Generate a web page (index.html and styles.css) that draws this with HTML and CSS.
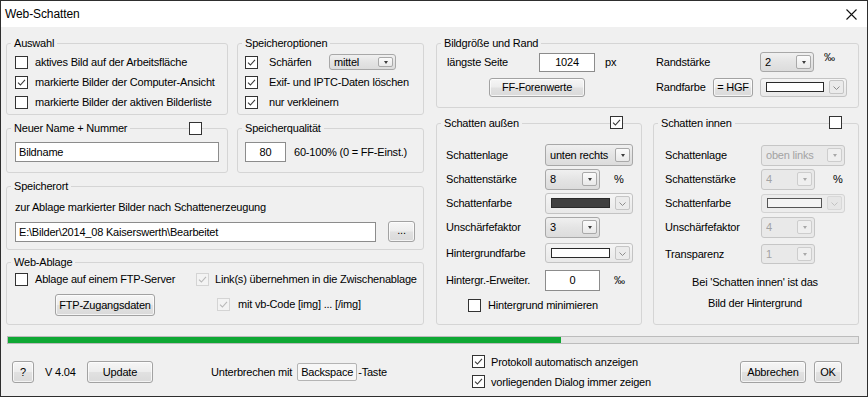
FILE: index.html
```html
<!DOCTYPE html>
<html lang="de">
<head>
<meta charset="utf-8">
<title>Web-Schatten</title>
<link rel="stylesheet" href="styles.css">
</head>
<body>
<div class="win">
  <div class="titlebar">
    <span class="title">Web-Schatten</span>
    <svg class="close" width="11" height="11" viewBox="0 0 11 11"><path d="M0.5 0.5 L10.5 10.5 M10.5 0.5 L0.5 10.5" stroke="#111" stroke-width="1.1" fill="none"/></svg>
  </div>
  <div class="client">
    <div class="main">
      <div class="leftcol">
        <div class="row row1">
          <fieldset class="grp g-auswahl">
            <legend>Auswahl</legend>
            <div class="gbody">
              <div class="crow"><span class="cb"></span><span>aktives Bild auf der Arbeitsfläche</span></div>
              <div class="crow"><span class="cb"><svg viewBox="0 0 11 11"><path d="M2 5.6 L4.4 8 L9 2.8"/></svg></span><span>markierte Bilder der Computer-Ansicht</span></div>
              <div class="crow"><span class="cb"></span><span>markierte Bilder der aktiven Bilderliste</span></div>
            </div>
          </fieldset>
          <fieldset class="grp g-speicher">
            <legend>Speicheroptionen</legend>
            <div class="gbody">
              <div class="crow gap11"><span class="cb"><svg viewBox="0 0 11 11"><path d="M2 5.6 L4.4 8 L9 2.8"/></svg></span><span class="lbl-schaerfen">Schärfen</span><span class="combo w67 h16"><span class="ctext">mittel</span><span class="cbtn"><i class="arr"></i></span></span></div>
              <div class="crow gap11"><span class="cb"><svg viewBox="0 0 11 11"><path d="M2 5.6 L4.4 8 L9 2.8"/></svg></span><span>Exif- und IPTC-Daten löschen</span></div>
              <div class="crow gap11"><span class="cb"><svg viewBox="0 0 11 11"><path d="M2 5.6 L4.4 8 L9 2.8"/></svg></span><span>nur verkleinern</span></div>
            </div>
          </fieldset>
        </div>
        <div class="row row2">
          <div class="grpwrap w222">
            <fieldset class="grp g-name">
              <legend>Neuer Name + Nummer</legend>
              <div class="gbody">
                <input class="tb w204" type="text" value="Bildname">
              </div>
            </fieldset>
            <span class="cb legend-cb cb-name"></span>
          </div>
          <fieldset class="grp g-quali">
            <legend>Speicherqualität</legend>
            <div class="gbody">
              <input class="tb w41 center" type="text" value="80">
              <span>60-100% (0 = FF-Einst.)</span>
            </div>
          </fieldset>
        </div>
        <fieldset class="grp g-ort">
          <legend>Speicherort</legend>
          <div class="gbody">
            <div class="ort-text">zur Ablage markierter Bilder nach Schattenerzeugung</div>
            <div class="ort-row">
              <input class="tb w361" type="text" value="E:\Bilder\2014_08 Kaiserswerth\Bearbeitet">
              <span class="btn b-dots">...</span>
            </div>
          </div>
        </fieldset>
        <fieldset class="grp g-web">
          <legend>Web-Ablage</legend>
          <div class="gbody">
            <div class="crow"><span class="cb"></span><span>Ablage auf einem FTP-Server</span></div>
            <div class="crow gap6"><span class="cb dis"><svg viewBox="0 0 11 11"><path d="M2 5.6 L4.4 8 L9 2.8"/></svg></span><span>Link(s) übernehmen in die Zwischenablage</span></div>
            <div class="wcell"><span class="btn b-ftp">FTP-Zugangsdaten</span></div>
            <div class="crow gap8 indent-vb"><span class="cb dis"><svg viewBox="0 0 11 11"><path d="M2 5.6 L4.4 8 L9 2.8"/></svg></span><span>mit vb-Code [img] ... [/img]</span></div>
          </div>
        </fieldset>
      </div>

      <div class="rightcol">
        <fieldset class="grp g-bild">
          <legend>Bildgröße und Rand</legend>
          <div class="gbody">
            <div class="brow">
              <span class="lbl w92">längste Seite</span>
              <input class="tb w56 h19 center" type="text" value="1024">
              <span class="unit">px</span>
            </div>
            <div class="brow">
              <span class="lbl w104">Randstärke</span>
              <span class="combo w54 h20"><span class="ctext">2</span><span class="cbtn"><i class="arr"></i></span></span>
              <span class="permille up">‰</span>
            </div>
            <div class="brow">
              <span class="btn b-ff">FF-Forenwerte</span>
            </div>
            <div class="brow">
              <span class="lbl w57">Randfarbe</span>
              <span class="btn b-hgf">= HGF</span>
              <span class="ccombo w87 h19"><span class="swatch white"></span><span class="cbtn2"><svg viewBox="0 0 13 11"><path d="M3.5 4.5 L6.5 7.5 L9.5 4.5"/></svg></span></span>
            </div>
          </div>
        </fieldset>

        <div class="row row-schatten">
          <div class="grpwrap w206">
            <fieldset class="grp g-aussen">
              <legend>Schatten außen</legend>
              <div class="gbody">
                <div class="srow"><span class="lbl w99">Schattenlage</span><span class="combo w88 h22"><span class="ctext">unten rechts</span><span class="cbtn"><i class="arr"></i></span></span></div>
                <div class="srow"><span class="lbl w99">Schattenstärke</span><span class="combo w55 h21"><span class="ctext">8</span><span class="cbtn"><i class="arr"></i></span></span><span class="unit u14">%</span></div>
                <div class="srow"><span class="lbl w99">Schattenfarbe</span><span class="ccombo w88 h21"><span class="swatch dark"></span><span class="cbtn2"><svg viewBox="0 0 13 11"><path d="M3.5 4.5 L6.5 7.5 L9.5 4.5"/></svg></span></span></div>
                <div class="srow"><span class="lbl w99">Unschärfefaktor</span><span class="combo w55 h21"><span class="ctext">3</span><span class="cbtn"><i class="arr"></i></span></span></div>
                <div class="srow mt2"><span class="lbl w99">Hintergrundfarbe</span><span class="ccombo w88 h20"><span class="swatch white"></span><span class="cbtn2"><svg viewBox="0 0 13 11"><path d="M3.5 4.5 L6.5 7.5 L9.5 4.5"/></svg></span></span></div>
                <div class="srow mt2 h26"><span class="lbl w99">Hintergr.-Erweiter.</span><input class="tb w55 h21 center" type="text" value="0"><span class="unit u14">‰</span></div>
                <div class="srow crow-ind"><span class="cb"></span><span>Hintergrund minimieren</span></div>
              </div>
            </fieldset>
            <span class="cb legend-cb cb-aussen"><svg viewBox="0 0 11 11"><path d="M2 5.6 L4.4 8 L9 2.8"/></svg></span>
          </div>
          <div class="grpwrap w206">
            <fieldset class="grp g-innen">
              <legend>Schatten innen</legend>
              <div class="gbody">
                <div class="srow"><span class="lbl w96">Schattenlage</span><span class="combo dis w84 h21"><span class="ctext">oben links</span><span class="cbtn"><i class="arr"></i></span></span></div>
                <div class="srow"><span class="lbl w96">Schattenstärke</span><span class="combo dis w54 h21"><span class="ctext">4</span><span class="cbtn"><i class="arr"></i></span></span><span class="unit u18">%</span></div>
                <div class="srow"><span class="lbl w96">Schattenfarbe</span><span class="ccombo dis w84 h19"><span class="swatch light"></span><span class="cbtn2"><svg viewBox="0 0 13 11"><path d="M3.5 4.5 L6.5 7.5 L9.5 4.5"/></svg></span></span></div>
                <div class="srow"><span class="lbl w96">Unschärfefaktor</span><span class="combo dis w54 h21"><span class="ctext">4</span><span class="cbtn"><i class="arr"></i></span></span></div>
                <div class="srow mt3"><span class="lbl w96">Transparenz</span><span class="combo dis w54 h20"><span class="ctext">1</span><span class="cbtn"><i class="arr"></i></span></span></div>
                <div class="note">
                  <div>Bei 'Schatten innen' ist das</div>
                  <div>Bild der Hintergrund</div>
                </div>
              </div>
            </fieldset>
            <span class="cb legend-cb cb-innen"></span>
          </div>
        </div>
      </div>
    </div>

    <div class="progress"><div class="fill" style="width:65%"></div></div>

    <div class="footer">
      <span class="btn b-help">?</span>
      <span class="version">V 4.04</span>
      <span class="btn b-update">Update</span>
      <span class="interrupt">Unterbrechen mit <span class="key">Backspace</span><span class="after-key">-Taste</span></span>
      <div class="fchecks">
        <div class="crow gap6"><span class="cb"><svg viewBox="0 0 11 11"><path d="M2 5.6 L4.4 8 L9 2.8"/></svg></span><span>Protokoll automatisch anzeigen</span></div>
        <div class="crow gap6"><span class="cb"><svg viewBox="0 0 11 11"><path d="M2 5.6 L4.4 8 L9 2.8"/></svg></span><span>vorliegenden Dialog immer zeigen</span></div>
      </div>
      <span class="btn b-cancel">Abbrechen</span>
      <span class="btn b-ok">OK</span>
    </div>
  </div>
</div>
</body>
</html>
```
FILE: styles.css
```css
* { box-sizing: border-box; }
html, body { margin: 0; padding: 0; }
body {
  font-family: "Liberation Sans", Arial, sans-serif;
  font-size: 11px;
  letter-spacing: -0.2px;
  color: #000;
  background: #fff;
  white-space: nowrap;
}

.win {
  width: 868px;
  height: 397px;
  border: 1px solid #2e2e2e;
  background: #f0f0f0;
  display: flex;
  flex-direction: column;
}

.titlebar {
  height: 26px;
  background: #fff;
  display: flex;
  align-items: center;
  justify-content: space-between;
  padding: 0 10px 0 4px;
  flex: none;
}
.title { font-size: 12px; letter-spacing: -0.1px; }
.close { display: block; margin-top: 1px; }

.client {
  flex: 1;
  padding: 9px 8px 0 5px;
}

.main { display: flex; gap: 12px; }
.leftcol { width: 418px; display: flex; flex-direction: column; }
.rightcol { width: 423px; display: flex; flex-direction: column; }
.row { display: flex; gap: 9px; }
.row1 { height: 79px; }
.row2 { height: 52px; margin-top: 6px; }
.row-schatten { height: 209px; margin-top: 8px; gap: 11px; }

/* group boxes */
.grp {
  margin: 0;
  padding: 0;
  min-width: 0;
  border: 1px solid #d5d5d5;
  border-radius: 3px;
}
.grp legend {
  margin-left: 4px;
  padding: 0 3px;
  line-height: 14px;
  font-size: 11px;
}
.grpwrap { position: relative; display: flex; }
.grpwrap > .grp { flex: 1; }
.w222 { width: 222px; }
.w206 { width: 206px; }

.g-auswahl { width: 222px; }
.g-speicher { width: 187px; }
.g-auswahl .gbody { padding: 2px 8px 0; }
.g-speicher .gbody { padding: 2px 7px 0; }
.g-name .gbody { padding: 7px 8px 0; }
.g-quali { width: 187px; }
.g-quali .gbody { padding: 7px 7px 0; display: flex; align-items: center; gap: 8px; }
.g-ort { height: 71px; margin-top: 6px; }
.g-ort .gbody { padding: 7px 8px 0; }
.ort-text { line-height: 14px; }
.ort-row { display: flex; align-items: center; gap: 12px; margin-top: 7px; }
.g-web { height: 70px; margin-top: 5px; }
.g-web .gbody {
  padding: 0 8px;
  display: grid;
  grid-template-columns: 181px auto;
  grid-template-rows: 25px 22px;
}
.wcell { display: flex; align-items: center; }
.indent-vb { margin-left: 21px; }

.g-bild { height: 72px; }
.g-bild .gbody {
  padding: 0 10px;
  display: grid;
  grid-template-columns: 209px auto;
  grid-template-rows: 24px 24px;
  row-gap: 1px;
}
.brow { display: flex; align-items: center; }

.g-aussen .gbody { padding: 13px 9px 0; }
.g-innen .gbody { padding: 13px 11px 0; }
.srow { display: flex; align-items: center; height: 24px; }
.mt2 { margin-top: 2px; }
.mt3 { margin-top: 3px; }
.h26 { height: 26px; }
.crow-ind { padding-left: 22px; gap: 7px; }
.note { margin-top: 6px; text-align: center; padding-right: 2px; }
.note div { height: 21px; line-height: 21px; }

/* checkbox rows */
.crow { display: flex; align-items: center; height: 20px; gap: 7px; }
.gap11 { gap: 11px; }
.gap8 { gap: 8px; }
.gap6 { gap: 6px; }
.lbl-schaerfen { width: 49px; }

.cb {
  width: 13px;
  height: 13px;
  border: 1px solid #333;
  background: #fff;
  flex: none;
  display: block;
}
.cb svg { display: block; width: 11px; height: 11px; }
.cb svg path { fill: none; stroke: #3a3a3a; stroke-width: 1.1; }
.cb.dis { border-color: #d4d4d4; background: #f3f3f3; }
.cb.dis svg path { stroke: #b8b8b8; }

.legend-cb { position: absolute; top: 1px; }
.cb-name { left: 183px; }
.cb-aussen { left: 174px; top: 0; }
.cb-innen { left: 176px; top: 0; }

/* labels & units */
.lbl { flex: none; }
.w92 { width: 92px; }
.w104 { width: 104px; }
.w57 { width: 57px; }
.w99 { width: 99px; }
.w96 { width: 96px; }
.unit { margin-left: 10px; }
.u14 { margin-left: 14px; }
.u18 { margin-left: 18px; }
.permille { margin-left: 10px; }
.up { align-self: flex-start; margin-top: 1px; }

/* text boxes */
.tb {
  font: inherit;
  letter-spacing: inherit;
  color: #000;
  background: #fff;
  border: 1px solid #8c8c8c;
  height: 20px;
  padding: 0 3px;
  margin: 0;
  outline: none;
  flex: none;
}
.tb.center { text-align: center; }
.w204 { width: 204px; }
.w41 { width: 41px; }
.w361 { width: 361px; }
.w56 { width: 56px; }
.w55 { width: 55px; }
.w54 { width: 54px; }
.w67 { width: 67px; }
.w84 { width: 84px; }
.w87 { width: 87px; }
.w88 { width: 88px; }
.h16 { height: 16px; }
.h19 { height: 19px; }
.h20 { height: 20px; }
.h21 { height: 21px; }
.h22 { height: 22px; }

/* combo boxes */
.combo {
  display: flex;
  align-items: center;
  border: 1px solid #a8a8a8;
  border-radius: 3px;
  background: linear-gradient(#f0f0f0, #e4e4e4 50%, #dcdcdc);
  padding: 0 2px 0 4px;
  flex: none;
}
.ctext { flex: 1; white-space: nowrap; overflow: hidden; }
.cbtn {
  width: 15px;
  height: calc(100% - 4px);
  max-height: 14px;
  border: 1px solid #a9a9a9;
  border-radius: 2px;
  background: linear-gradient(#fbfbfb, #e9e9e9);
  display: flex;
  align-items: center;
  justify-content: center;
  flex: none;
}
.arr {
  display: block;
  width: 0;
  height: 0;
  border-left: 2.5px solid transparent;
  border-right: 2.5px solid transparent;
  border-top: 3px solid #3c3c3c;
}
.combo.dis { color: #a3a3a3; border-color: #c6c6c6; background: #e9e9e9; }
.combo.dis .cbtn { border-color: #cdcdcd; background: #efefef; }
.combo.dis .arr { border-top-color: #a8a8a8; }

.ccombo {
  display: flex;
  align-items: center;
  border: 1px solid #c3c3c3;
  border-radius: 3px;
  background: linear-gradient(#f5f5f5, #e8e8e8);
  padding: 0 2px 0 5px;
  flex: none;
  gap: 5px;
}
.swatch { flex: 1; height: 10px; border: 1px solid #2a2a2a; }
.swatch.dark { background: #404040; }
.swatch.white { background: #fff; }
.swatch.light { background: #f4f4f4; border-color: #555; }
.cbtn2 {
  width: 15px;
  height: 14px;
  border: 1px solid #c5c5c5;
  border-radius: 2px;
  background: #ebebeb;
  flex: none;
  display: flex;
  align-items: flex-end;
  justify-content: center;
}
.cbtn2 svg { display: block; width: 13px; height: 11px; }
.cbtn2 svg path { fill: none; stroke: #8c8c8c; stroke-width: 1; }
.ccombo.dis { border-color: #d3d3d3; background: #ececec; }
.ccombo.dis .cbtn2 { border-color: #d8d8d8; background: #e6e6e6; }
.ccombo.dis .cbtn2 svg path { stroke: #c2c2c2; }

/* buttons */
.btn {
  display: inline-flex;
  align-items: center;
  justify-content: center;
  border: 1px solid #a2a2a2;
  border-radius: 3px;
  background: linear-gradient(#f6f6f6, #ededed 48%, #e1e1e1 52%, #dadada);
  box-shadow: inset 0 0 0 1px rgba(255,255,255,0.7);
  flex: none;
  white-space: nowrap;
}
.b-dots { width: 27px; height: 21px; padding-bottom: 3px; }
.b-ftp { width: 100px; height: 22px; margin-left: 40px; }
.b-ff { width: 96px; height: 19px; margin-left: 42px; }
.b-hgf { width: 40px; height: 19px; margin-right: 7px; }
.b-help { width: 22px; height: 22px; margin-left: 6px; }
.b-update { width: 66px; height: 22px; }
.b-cancel { width: 66px; height: 22px; }
.b-ok { width: 28px; height: 22px; margin-left: 8px; }

/* progress */
.progress {
  margin: 11px 0 0 1px;
  width: 852px;
  height: 8px;
  border: 1px solid #bcbcbc;
  background: #e6e6e6;
}
.fill { height: 100%; background: #0fa834; }

/* footer */
.footer { display: flex; align-items: center; height: 41px; margin-top: 7px; }
.version { width: 42px; margin-left: 11px; }
.interrupt { width: 261px; margin-left: 58px; display: flex; align-items: center; }
.key {
  width: 60px;
  height: 18px;
  border: 1px solid #b4b4b4;
  border-radius: 2px;
  background: #f7f7f7;
  display: inline-flex;
  align-items: center;
  justify-content: center;
  margin-left: 5px;
}
.after-key { margin-left: 1px; }
.fchecks { width: 268px; display: flex; flex-direction: column; }
```
